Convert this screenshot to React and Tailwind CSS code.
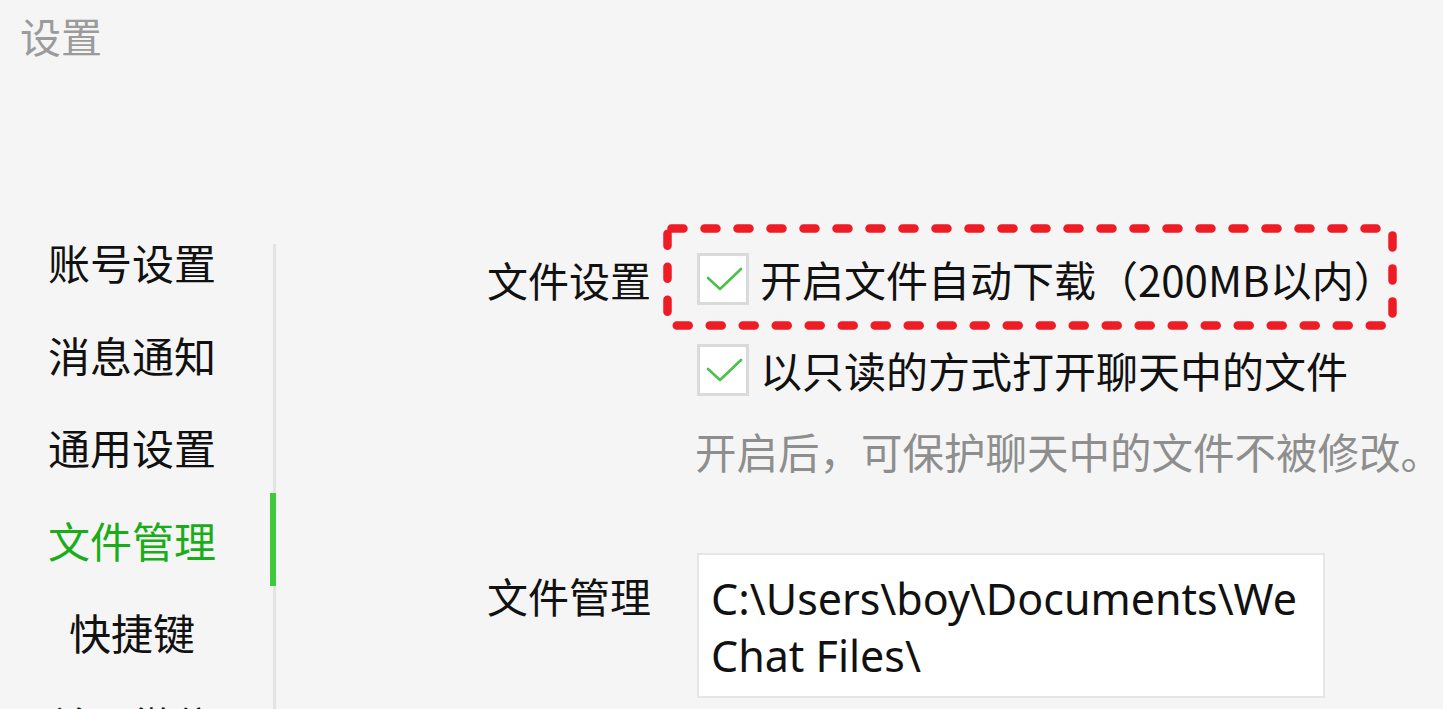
const cjk = "font-['Noto_Sans_CJK_SC','Noto_Sans',sans-serif]";

function CheckBox() {
  return (
    <div className="w-[52px] h-[52px] shrink-0 border-[3px] border-[#dadada] bg-white">
      <svg width="46" height="46" viewBox="0 0 46 46">
        <polyline
          points="8,22 20,33 41,13"
          fill="none"
          stroke="#4cbf4c"
          strokeWidth="2.6"
          strokeLinecap="round"
          strokeLinejoin="round"
        />
      </svg>
    </div>
  );
}

const menu = ["账号设置", "消息通知", "通用设置", "文件管理", "快捷键", "关于微信"];

export default function App() {
  return (
    <div className={`relative h-[709px] w-[1443px] overflow-hidden bg-[#f5f5f5] ${cjk}`}>
      {/* TITRE */}
      <div className="pl-[20px] pt-[15px] text-[41px] leading-none text-[#9b9b9b]">设置</div>

      <div className="flex mt-[160px]">
        {/* MENU */}
        <div className="w-[264px] shrink-0">
          {menu.map((m) => (
            <div
              key={m}
              className={`h-[92.5px] flex items-center justify-center text-[42px] leading-none ${
                m === "文件管理" ? "text-[#1aad19]" : "text-[#111]"
              }`}
            >
              {m}
            </div>
          ))}
        </div>

        {/* SEPARATEUR */}
        <div className="relative w-[12px] shrink-0 self-stretch">
          <div className="absolute left-[9px] top-[28px] bottom-0 w-[3px] bg-[#e3e3e3]" />
          <div className="absolute left-[6px] top-[277px] h-[93px] w-[6px] bg-[#3ec93e]" />
        </div>

        {/* CONTENU */}
        <div className="ml-[211px] pt-[17px] text-[#111]">
          <div className="flex items-center h-[92px]">
            <div className="w-[210px] text-[41px] leading-none">文件设置</div>
            <CheckBox />
            <div className="ml-[11px] text-[42px] leading-none whitespace-nowrap">开启文件自动下载（200MB以内）</div>
          </div>
          <div className="flex items-center h-[90px]">
            <div className="w-[210px]" />
            <CheckBox />
            <div className="ml-[11px] text-[42px] leading-none whitespace-nowrap">以只读的方式打开聊天中的文件</div>
          </div>
          <div className="flex items-center h-[74px]">
            <div className="w-[210px]" />
            <div className="-ml-[2px] text-[41.5px] leading-none text-[#8e8e8e] whitespace-nowrap">开启后，可保护聊天中的文件不被修改。</div>
          </div>

          <div className="flex mt-[64px]">
            <div className="w-[210px] pt-[22px] text-[41px] leading-none">文件管理</div>
            <div className="w-[628px] h-[145px] border-2 border-[#e6e6e6] bg-white pl-[12px] pr-[16px] pt-[15px] font-['Noto_Sans',sans-serif] text-[43px] leading-[57px] break-all text-[#111]">
              C:\Users\boy\Documents\WeChat Files\
            </div>
          </div>
        </div>
      </div>

      {/* ANNOTATION */}
      <svg className="absolute left-[663px] top-[224px]" width="734" height="106" viewBox="0 0 734 106">
        <rect
          x="4.5"
          y="4.5"
          width="725"
          height="97"
          rx="4"
          fill="none"
          stroke="#ee1c25"
          strokeWidth="8.5"
          strokeDasharray="12 21"
          strokeLinecap="round"
        />
      </svg>
    </div>
  );
}
